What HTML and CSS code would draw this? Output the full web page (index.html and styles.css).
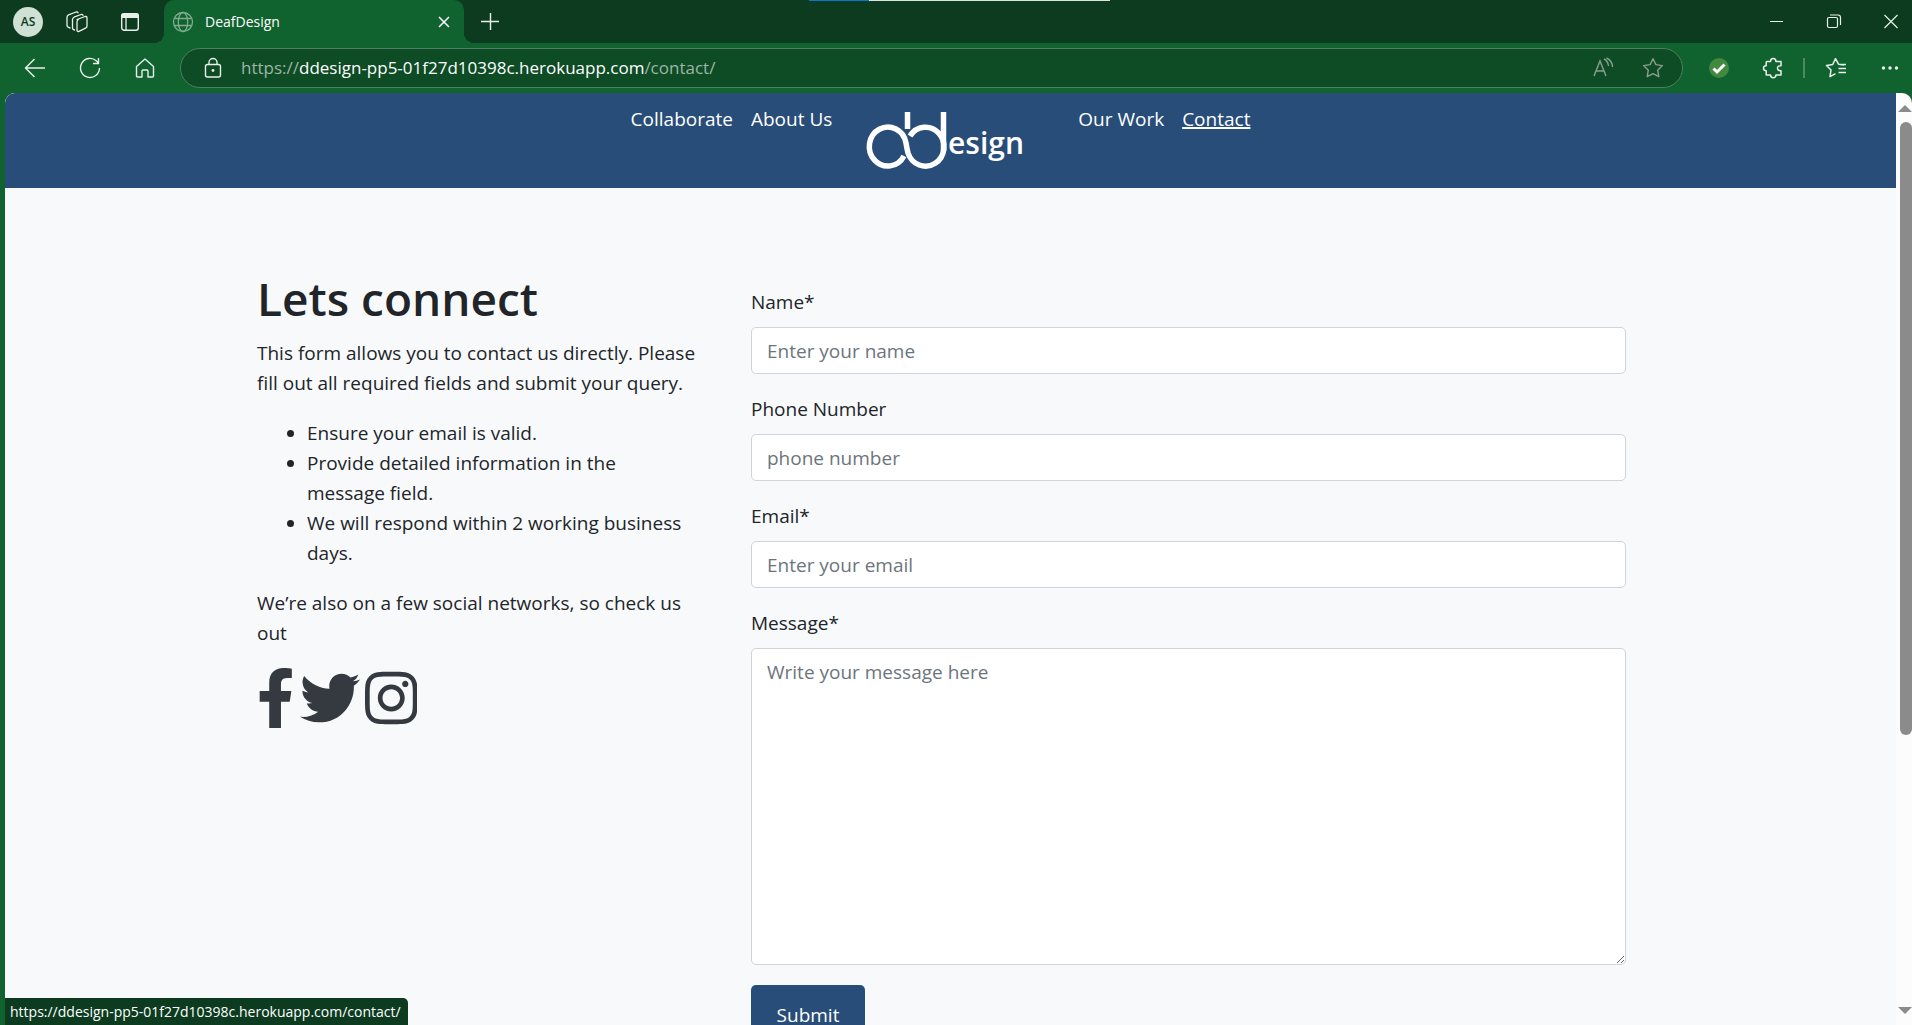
FILE: index.html
```html
<!DOCTYPE html>
<html lang="en">
<head>
<meta charset="utf-8">
<meta name="viewport" content="width=device-width, initial-scale=1">
<title>DeafDesign</title>
<link rel="stylesheet" href="styles.css">
</head>
<body>
<div class="browser">
  <div class="tabbar">
    <button class="profile" type="button">AS</button>
    <button class="icon-btn workspaces" type="button" aria-label="Workspaces">
      <svg width="24" height="24" viewBox="0 0 24 24"><g fill="none" stroke="currentColor" stroke-width="1.3" stroke-linejoin="round" stroke-linecap="round"><path d="M12 9.5 20 6.500Q22 6 22 8v8q0 1.500-1.500 2.200L14 21.300Q12 22 12 20V12q0-1.800 1.500-2.500Z"/><path d="M9.500 20q-2-.5-2-2V9.500Q7.500 8 9 7.200L16 4.500q1.500-.4 2 .8"/><path d="M5 18q-3-.8-3-2.800V7.200Q2 5.500 3.500 4.800L11 2q1.600-.4 2 .8"/></g></svg>
    </button>
    <button class="icon-btn" type="button" aria-label="Tab actions">
      <svg width="24" height="24" viewBox="0 0 24 24"><rect x="3.700" y="3.700" width="16.600" height="16.600" rx="2.500" fill="none" stroke="currentColor" stroke-width="1.400"/><path d="M3 8V6q0-3 3-3h12q3 0 3 3v2Z" fill="currentColor"/><path d="M8 8v12" stroke="currentColor" stroke-width="1.300"/></svg>
    </button>
    <div class="tab">
      <svg class="globe" width="22" height="22" viewBox="0 0 22 22"><g fill="none" stroke="currentColor" stroke-width="1.300"><circle cx="11" cy="11" r="9.500"/><ellipse cx="11" cy="11" rx="4.700" ry="9.500"/><path d="M2.500 7.500h17M2.500 14.500h17"/></g></svg>
      <span class="tab-title">DeafDesign</span>
      <button class="icon-btn" type="button" aria-label="Close tab">
        <svg width="24" height="24" viewBox="0 0 24 24"><path d="m7 7 10 10M17 7 7 17" stroke="currentColor" stroke-width="1.500"/></svg>
      </button>
    </div>
    <button class="icon-btn new-tab" type="button" aria-label="New tab">
      <svg width="24" height="24" viewBox="0 0 24 24"><path d="M3 11.500h18M12.500 3v17" stroke="currentColor" stroke-width="1.400"/></svg>
    </button>
    <div class="window-controls">
      <button class="icon-btn" type="button" aria-label="Minimize"><svg width="24" height="24" viewBox="0 0 24 24"><path d="M5 11.500h13" stroke="currentColor"/></svg></button>
      <button class="icon-btn" type="button" aria-label="Restore"><svg width="24" height="24" viewBox="0 0 24 24"><g fill="none" stroke="currentColor" stroke-width="1.200"><rect x="5.500" y="7.500" width="10" height="10" rx="1.500"/><path d="M8 5h8q2.500 0 2.500 2.500V15"/></g></svg></button>
      <button class="icon-btn" type="button" aria-label="Close"><svg width="24" height="24" viewBox="0 0 24 24"><path d="m5.500 5 13 13M18.500 5l-13 13" stroke="currentColor" stroke-width="1.200"/></svg></button>
    </div>
    <div class="load-strip"></div>
  </div>

  <div class="toolbar">
    <button class="icon-btn" type="button" aria-label="Back"><svg width="24" height="24" viewBox="0 0 24 24"><path d="M22 12H2.500M11.500 3l-9 9 9 9" fill="none" stroke="currentColor" stroke-width="1.400"/></svg></button>
    <button class="icon-btn" type="button" aria-label="Refresh"><svg width="24" height="24" viewBox="0 0 24 24"><path d="M21.500 12A9.500 9.500 0 1 1 18.500 5L20.500 7M20.500 2v5.500H15" fill="none" stroke="currentColor" stroke-width="1.400"/></svg></button>
    <button class="icon-btn" type="button" aria-label="Home"><svg width="24" height="24" viewBox="0 0 24 24"><path d="M3.500 10.500 12 3l8.500 7.500V20q0 1-1 1H15v-6q0-1-1-1h-4q-1 0-1 1v6H4.500q-1 0-1-1Z" fill="none" stroke="currentColor" stroke-width="1.400" stroke-linejoin="round"/></svg></button>
    <div class="address">
      <svg class="lock" width="24" height="24" viewBox="0 0 24 24"><g fill="none" stroke="currentColor" stroke-width="1.400"><rect x="4.500" y="8.500" width="15" height="12.500" rx="2"/><path d="M8 8V6.500a4 4 0 0 1 8 0V8"/></g><circle cx="12" cy="14.500" r="1.400" fill="currentColor"/></svg>
      <p class="url"><span class="dim">https://</span>ddesign-pp5-01f27d10398c.herokuapp.com<span class="dim">/contact/</span></p>
      <button class="icon-btn muted" type="button" aria-label="Read aloud"><svg width="24" height="24" viewBox="0 0 24 24"><path d="M3 20 9 5l6 15M5.200 15h7.600M13 3q4 2 4.500 7M15.500 2q6 3 6 9" fill="none" stroke="currentColor" stroke-width="1.400"/></svg></button>
      <button class="icon-btn muted" type="button" aria-label="Add to favorites"><svg width="24" height="24" viewBox="0 0 24 24"><path d="m12 2.700 2.900 5.900 6.500 1-4.700 4.600 1.100 6.500-5.800-3.100-5.800 3.100 1.100-6.500L2.600 9.600l6.500-1Z" fill="none" stroke="currentColor" stroke-width="1.400" stroke-linejoin="round"/></svg></button>
    </div>
    <div class="extensions">
      <button class="icon-btn" type="button" aria-label="Protection"><svg width="24" height="24" viewBox="0 0 24 24"><circle cx="12" cy="12" r="10" fill="#40893f"/><path d="m6.500 12.500 3.500 3.500 7.500-7.500" fill="none" stroke="#fff" stroke-width="3"/></svg></button>
      <button class="icon-btn" type="button" aria-label="Extensions"><svg width="24" height="24" viewBox="0 0 24 24"><path d="M6 5.500h3.500q0-3 2.700-3t2.700 3H20v4.300q-3.500-.3-3.500 2.400t3.500 2.500V19h-5.100q0 2.700-2.700 2.700T9.500 19H5.200v-4.300q-2.700 0-2.700-2.500t2.700-2.400V6.500q0-1 .8-1Z" fill="none" stroke="currentColor" stroke-width="1.500" stroke-linejoin="round"/></svg></button>
      <span class="divider"></span>
      <button class="icon-btn" type="button" aria-label="Favorites"><svg width="24" height="24" viewBox="0 0 24 24"><path d="M20 9l-5.500-.8L11.500 2.700 8.700 8.500l-6.200 1 4.500 4.500-1 6.700 5.500-3M14.500 12.500H22M14.500 16.500H22M14.500 8.500H22" fill="none" stroke="currentColor" stroke-width="1.500" stroke-linejoin="round"/></svg></button>
      <button class="icon-btn" type="button" aria-label="More"><svg width="24" height="24" viewBox="0 0 24 24"><g fill="currentColor"><circle cx="5.500" cy="12" r="1.700"/><circle cx="12" cy="12" r="1.700"/><circle cx="18.500" cy="12" r="1.700"/></g></svg></button>
    </div>
  </div>

  <div class="viewport">
    <div class="page">
      <nav class="site-nav">
        <a href="#collaborate">Collaborate</a>
        <a href="#about">About Us</a>
        <a class="brand" href="#home" aria-label="Home">
          <svg width="190" height="80" viewBox="0 0 190 80"><g fill="none" stroke="#fff" stroke-width="5.500"><path d="M54 56A18.500 19.500 0 1 1 56 43Q57 49 58 53A18.500 19.500 0 1 0 60 36"/><path d="M57.500 12v17M93.500 12v39"/></g><text class="brand-text" x="98" y="54">esign</text></svg>
        </a>
        <a href="#work">Our Work</a>
        <a class="active" href="#contact">Contact</a>
      </nav>
      <main class="container">
        <section class="intro">
          <h1>Lets connect</h1>
          <p>This form allows you to contact us directly. Please fill out all required fields and submit your query.</p>
          <ul>
            <li>Ensure your email is valid.</li>
            <li>Provide detailed information in the message field.</li>
            <li>We will respond within 2 working business days.</li>
          </ul>
          <p>We’re also on a few social networks, so check us out</p>
          <div class="social">
            <a href="#facebook" aria-label="Facebook"><svg height="60" viewBox="0 0 320 512"><path d="M279.14 288l14.22-92.66h-88.91v-60.13c0-25.35 12.42-50.06 52.24-50.06h40.42V6.26S260.43 0 225.36 0c-73.22 0-121.08 44.38-121.08 124.72v70.62H22.89V288h81.39v224h100.17V288z"/></svg></a>
            <a href="#twitter" aria-label="Twitter"><svg height="60" viewBox="0 0 512 512"><path d="M459.37 151.716c.325 4.548.325 9.097.325 13.645 0 138.72-105.583 298.558-298.558 298.558-59.452 0-114.68-17.219-161.137-47.106 8.447.974 16.568 1.299 25.34 1.299 49.055 0 94.213-16.568 130.274-44.832-46.132-.975-84.792-31.188-98.112-72.772 6.498.974 12.995 1.624 19.818 1.624 9.421 0 18.843-1.3 27.614-3.573-48.081-9.747-84.143-51.98-84.143-102.985v-1.299c13.969 7.797 30.214 12.67 47.431 13.319-28.264-18.843-46.781-51.005-46.781-87.391 0-19.492 5.197-37.36 14.294-52.954 51.655 63.675 129.3 105.258 216.365 109.807-1.624-7.797-2.599-15.918-2.599-24.04 0-57.828 46.782-104.934 104.934-104.934 30.213 0 57.502 12.67 76.67 33.137 23.715-4.548 46.456-13.32 66.599-25.34-7.798 24.366-24.366 44.833-46.132 57.827 21.117-2.273 41.584-8.122 60.426-16.243-14.292 20.791-32.161 39.308-52.628 54.253z"/></svg></a>
            <a href="#instagram" aria-label="Instagram"><svg height="60" viewBox="0 0 448 512"><path d="M224.1 141c-63.6 0-114.9 51.3-114.9 114.9s51.3 114.9 114.9 114.9S339 319.5 339 255.9 287.7 141 224.1 141zm0 189.6c-41.1 0-74.7-33.5-74.7-74.7s33.5-74.7 74.7-74.7 74.7 33.5 74.7 74.7-33.6 74.7-74.7 74.7zm146.4-194.3c0 14.9-12 26.8-26.8 26.8-14.9 0-26.8-12-26.8-26.8s12-26.8 26.8-26.8 26.8 12 26.8 26.8zm76.1 27.2c-1.7-35.9-9.9-67.7-36.2-93.9-26.2-26.2-58-34.4-93.9-36.2-37-2.1-147.900-2.1-184.900 0-35.8 1.7-67.6 9.900-93.900 36.100s-34.400 58-36.200 93.900c-2.100 37-2.100 147.900 0 184.900 1.700 35.900 9.900 67.700 36.200 93.900s58 34.400 93.900 36.200c37 2.100 147.900 2.100 184.900 0 35.900-1.700 67.700-9.900 93.900-36.200 26.200-26.200 34.400-58 36.200-93.900 2.100-37 2.100-147.800 0-184.800zM398.800 388c-7.800 19.600-22.900 34.700-42.600 42.600-29.500 11.700-99.500 9-132.100 9s-102.700 2.600-132.100-9c-19.600-7.800-34.700-22.900-42.600-42.600-11.700-29.500-9-99.500-9-132.100s-2.600-102.700 9-132.100c7.800-19.600 22.900-34.700 42.600-42.600 29.500-11.700 99.500-9 132.100-9s102.700-2.600 132.100 9c19.600 7.800 34.700 22.900 42.600 42.600 11.700 29.500 9 99.500 9 132.100s2.700 102.700-9 132.100z"/></svg></a>
          </div>
        </section>
        <form class="contact-form">
          <div class="field"><label for="name">Name*</label><input id="name" type="text" placeholder="Enter your name"></div>
          <div class="field"><label for="phone">Phone Number</label><input id="phone" type="tel" placeholder="phone number"></div>
          <div class="field"><label for="email">Email*</label><input id="email" type="email" placeholder="Enter your email"></div>
          <div class="field"><label for="message">Message*</label><textarea id="message" rows="10" placeholder="Write your message here"></textarea></div>
          <button class="submit" type="button">Submit</button>
        </form>
      </main>
    </div>
    <div class="scrollbar">
      <svg width="14" height="8" viewBox="0 0 14 8"><path d="M0 7 7 0l7 7Z"/></svg>
      <div class="track"><div class="thumb"></div></div>
      <svg width="14" height="8" viewBox="0 0 14 8"><path d="M0 0h14L7 7Z"/></svg>
    </div>
    <div class="status">https://ddesign-pp5-01f27d10398c.herokuapp.com/contact/</div>
  </div>
</div>
</body>
</html>
```
FILE: styles.css
```css
:root {
  --frame: #10622f;
  --frame-dark: #0c3b1f;
  --navy: #284d78;
  --ink: #212529;
}

* { box-sizing: border-box; }

body {
  margin: 0;
  color: var(--ink);
  font: 19px/30px "Open Sans", "Noto Sans", sans-serif;
}

button { font: inherit; border: 0; padding: 0; background: none; color: inherit; }
svg { display: block; }

.browser {
  display: flex;
  flex-direction: column;
  height: 100vh;
  overflow: hidden;
  background: var(--frame);
}

.icon-btn { flex: none; width: 24px; height: 24px; }

/* Tab strip */
.tabbar {
  position: relative;
  display: flex;
  align-items: center;
  height: 43px;
  padding: 0 13px;
  background: var(--frame-dark);
  color: #e9f0eb;
}
.profile {
  width: 30px;
  height: 30px;
  border-radius: 50%;
  background: #cfe0d4;
  color: var(--frame-dark);
  font-size: 12px;
  font-weight: 600;
  line-height: 30px;
}
.workspaces { margin: 0 29px 0 22px; }
.tab {
  position: relative;
  display: flex;
  align-items: center;
  width: 300px;
  height: 43px;
  margin-left: 22px;
  padding: 0 8px;
  border-radius: 10px 10px 0 0;
  background: var(--frame);
  color: #fff;
  font-size: 14px;
}
.tab::before,
.tab::after {
  content: "";
  position: absolute;
  bottom: 0;
  width: 10px;
  height: 10px;
}
.tab::before { right: 100%; background: radial-gradient(circle at 0 0, transparent 10px, var(--frame) 10px); }
.tab::after { left: 100%; background: radial-gradient(circle at 100% 0, transparent 10px, var(--frame) 10px); }
.globe { color: #7fac8d; }
.tab-title { flex: 1; margin-left: 11px; }
.new-tab { margin-left: 14px; }
.window-controls { display: flex; gap: 33px; margin-left: auto; margin-right: -4px; }
.load-strip {
  position: absolute;
  top: 0;
  left: 809px;
  width: 301px;
  height: 1px;
  background: linear-gradient(90deg, #0a74d0 60px, #dfe5e0 60px);
}

/* Toolbar */
.toolbar {
  display: flex;
  align-items: center;
  gap: 31px;
  height: 50px;
  padding: 0 10px 0 23px;
  color: #e9f0eb;
}
.address {
  flex: 1;
  display: flex;
  align-items: center;
  gap: 26px;
  height: 40px;
  margin-left: -8px;
  padding: 0 17px 0 20px;
  border: 1px solid #4d8060;
  border-radius: 20px;
  background: #0d4c25;
}
.url { flex: 1; margin: 0 0 0 -10px; color: #fff; font-size: 17px; }
.dim { color: #9fb5a6; }
.muted { color: #8a9f90; }
.extensions { display: flex; align-items: center; gap: 30px; margin-left: -7px; }
.divider { width: 2px; height: 20px; margin: 0 -11px 0 -12px; background: #4d8a62; }

/* Web content */
.viewport {
  position: relative;
  flex: 1;
  display: flex;
  min-height: 0;
  margin-left: 5px;
  overflow: hidden;
  border-radius: 10px 10px 0 0;
  background: #fcfcfc;
}
.page { flex: 1; overflow: hidden; background: #f8f9fb; }
.site-nav {
  display: flex;
  justify-content: center;
  align-items: flex-start;
  gap: 18px;
  height: 95px;
  padding: 11px 20px 0 0;
  background: var(--navy);
}
.site-nav a { color: #fff; text-decoration: none; }
.site-nav .active { text-decoration: underline; text-decoration-thickness: 2px; }
.site-nav .brand { margin: -4px 20px 0 0; }
.brand-text { fill: #fff; font-size: 30px; font-weight: 600; }

.container {
  display: grid;
  grid-template-columns: 1fr 2fr;
  max-width: 1425px;
  margin: 0 auto;
  padding-top: 76px;
}
.intro { padding: 0 8px 0 19px; }
h1 { margin: 4px 0 10px; font-size: 46px; font-weight: 600; line-height: 60px; }
.intro p, .intro ul { margin: 0 0 20px; }
.intro ul { padding-left: 50px; }
.intro ul, .intro ul + p { padding-right: 10px; }
.social { display: flex; gap: 5px; fill: #343a40; }

.contact-form { padding: 23px 37px 0 38px; }
.field { display: flex; flex-direction: column; gap: 10px; margin-bottom: 20px; }
.field input,
.field textarea {
  width: 100%;
  padding: 8px 15px;
  border: 1px solid #ced4da;
  border-radius: 5px;
  background: #fff;
  color: inherit;
  font: inherit;
}
.field input { height: 47px; }
.field textarea { height: 317px; resize: vertical; }
::placeholder { color: #6c757d; opacity: 1; }
.submit {
  width: 114px;
  height: 60px;
  border-radius: 5px;
  background: var(--navy);
  color: #fff;
}

.scrollbar {
  display: flex;
  flex-direction: column;
  align-items: flex-end;
  width: 16px;
  padding: 12px 0 10px;
  fill: #8b8b8b;
}
.track { flex: 1; width: 14px; padding: 9px 0; }
.thumb { width: 12px; height: 70%; margin-left: 2px; border-radius: 6px; background: #8b8b8b; }

.status {
  position: absolute;
  left: 0;
  bottom: 0;
  height: 27px;
  padding: 0 7px 0 5px;
  border-top-right-radius: 5px;
  background: var(--frame-dark);
  color: #fff;
  font-size: 14px;
  line-height: 27px;
}
```
